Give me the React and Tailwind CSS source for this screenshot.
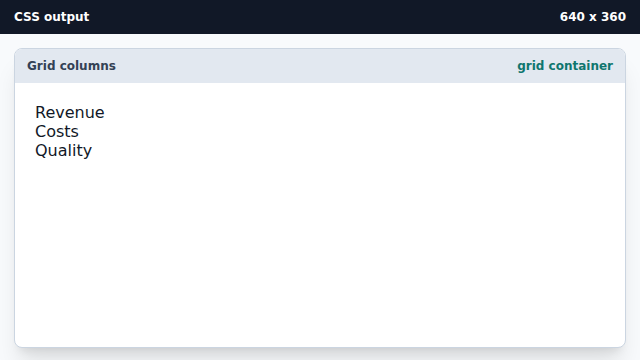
export default function App() {
  return (
    <div className="flex h-[360px] w-[640px] flex-col bg-slate-50 font-['DejaVu_Sans',sans-serif]">
      <div className="flex h-[34px] shrink-0 items-center justify-between bg-[#111827] px-[14px] text-[12px] font-bold text-white">
        <span>CSS output</span>
        <span>640 x 360</span>
      </div>
      <div className="flex flex-1 flex-col px-[14px] pt-[14px] pb-[12px]">
        <div className="flex flex-1 flex-col overflow-hidden rounded-lg border border-[#cbd5e1] bg-white shadow-xl">
          <div className="flex h-[34px] shrink-0 items-center justify-between bg-[#e2e8f0] px-3 text-[12px] font-bold">
            <span className="text-[#334155]">Grid columns</span>
            <span className="text-[#0f766e]">grid container</span>
          </div>
          <div className="grid content-start px-5 pt-[20px] text-[16px] leading-[19px] text-[#111827]">
            <div>Revenue</div>
            <div>Costs</div>
            <div>Quality</div>
          </div>
        </div>
      </div>
    </div>
  );
}
